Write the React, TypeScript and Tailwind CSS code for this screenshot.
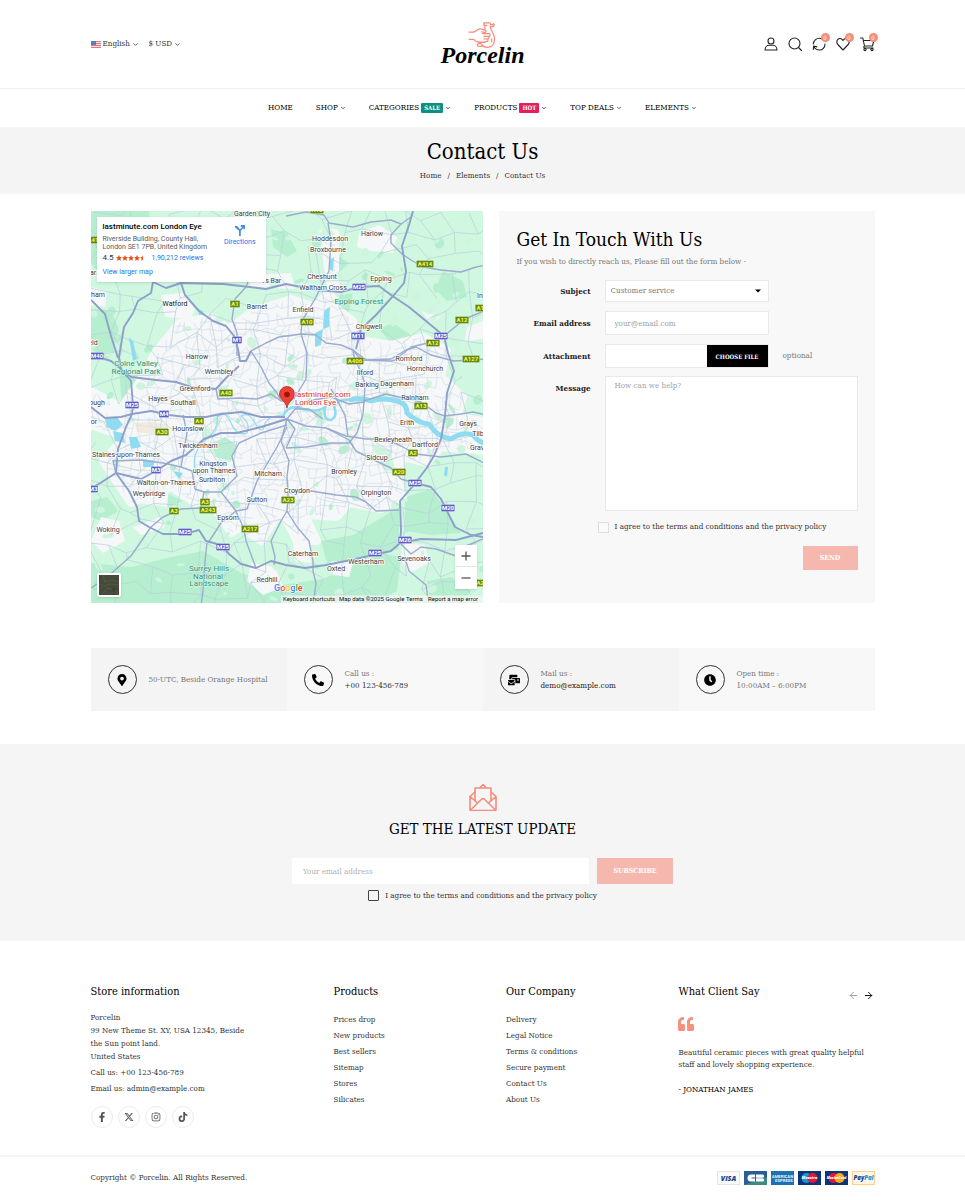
import React from "react";
import { FaMapMarkerAlt, FaPhoneAlt, FaMailBulk, FaClock, FaQuoteLeft, FaFacebookF, FaInstagram, FaTiktok } from "react-icons/fa";
import { FaXTwitter } from "react-icons/fa6";
import { ChevronDown, ArrowLeft, ArrowRight } from "lucide-react";

/* ---------- Map data ---------- */

type Label = [string, number, number];

const towns: Label[] = [
  ["Garden City", 161, 5], ["Watford", 84, 95], ["Barnet", 166, 98], ["rs Bar", 181, 72], ["ham", 7, 86], ["eld", 2, 134],
  ["ar", 2, 64], ["Harrow", 106, 148], ["Wembley", 128, 163], ["Greenford", 104, 180], ["Hayes", 67, 190], ["Southall", 92, 194],
  ["ough", 6, 194], ["Harlow", 281, 25], ["Hoddesdon", 239, 30], ["Broxbourne", 237, 41], ["Cheshunt", 231, 68],
  ["Waltham Cross", 232, 79], ["Epping", 290, 70], ["Enfield", 212, 101], ["Chigwell", 278, 118], ["Romford", 318, 150],
  ["Hornchurch", 334, 160], ["Ilford", 274, 164], ["Barking", 276, 176], ["Dagenham", 306, 175], ["Rainham", 324, 189],
  ["In", 389, 87], ["Hounslow", 97, 220], ["Twickenham", 107, 237], ["Staines-upon-Thames", 35, 246], ["Kingston", 122, 255],
  ["upon Thames", 123, 262], ["Surbiton", 121, 271], ["Mitcham", 177, 265], ["Walton-on-Thames", 75, 274], ["Weybridge", 58, 285],
  ["Sutton", 166, 291], ["Epsom", 137, 309], ["Woking", 17, 321], ["Redhill", 176, 371], ["or", 3, 213], ["Croydon", 206, 282],
  ["Caterham", 212, 345], ["Oxted", 245, 360], ["Westerham", 275, 353], ["Sevenoaks", 323, 350], ["Bromley", 253, 263],
  ["Orpington", 285, 284], ["Sidcup", 286, 249], ["Bexleyheath", 302, 231], ["Dartford", 334, 236], ["Erith", 316, 214],
  ["Grays", 377, 215], ["Tilb", 387, 225], ["Grav", 386, 239],
];

const parks: Label[] = [
  ["Colne Valley", 45, 155], ["Regional Park", 45, 163], ["Epping Forest", 268, 93],
  ["Surrey Hills", 118, 360], ["National", 117, 368], ["Landscape", 118, 375],
];

const aRoads: Label[] = [
  ["A1", 144, 93], ["A40", 135, 182], ["A41", 2, 29], ["A414", 334, 53], ["A10", 216, 111], ["A10", 226, -1], ["A12", 371, 109],
  ["A12", 342, 132], ["A406", 264, 150], ["A127", 380, 148], ["A12", 391, 97], ["A13", 330, 195], ["A4", 108, 210], ["A30", 71, 221],
  ["A3", 114, 291], ["A243", 117, 299], ["A3", 83, 300], ["A217", 159, 318], ["A2", 322, 242], ["A20", 308, 261], ["A23", 197, 289], ["A21", 391, 372],
];

const motorways: Label[] = [
  ["M1", 146, 129], ["M40", 6, 145], ["M25", 41, 194], ["M25", 268, 76], ["M11", 267, 125], ["M25", 350, 125], ["M4", 73, 203],
  ["M3", 65, 259], ["M3", 2, 278], ["M25", 94, 321], ["M25", 132, 336], ["M25", 324, 272], ["M20", 357, 297], ["M26", 314, 329], ["M25", 284, 342],
];

const trunk = [
  "62,71 60,82 47,90 42,102 33,116 28,146 30,158 40,170 42,194 41,203 35,216 27,238 25,262 38,280 46,296 48,310 58,316 72,323 94,323 108,319 115,330 130,334 138,343 150,353 165,357 180,350 195,354 214,357 235,354 260,349 300,340 309,332 310,320 309,290 322,275 335,258 343,245 350,228 354,205 356,182 363,160 357,142 353,125 335,110 318,96 300,84 288,75 268,76 250,81 225,79 195,73 175,78 150,75 132,73 90,72 75,77 62,71",
  "78,60 90,72 94,84 108,100 122,110 135,115 143,125 147,138 149,150 155,150 160,140",
  "0,89 14,103 20,125 27,147",
  "0,144 20,150 40,166 65,169 85,171 100,176 125,178 136,166 148,155",
  "0,196 14,207 30,206 41,203 60,200 78,204 95,206 115,206 130,203 150,201 170,206 194,206",
  "0,278 25,262 50,268 65,260 80,250 95,244 113,228 130,222 146,222 170,216 196,208",
  "322,0 318,14 311,35 315,60 313,72 303,84 285,104 270,118 265,138",
  "309,332 330,328 365,329 392,322",
  "328,273 340,276 350,288 358,304 364,316 380,324 392,326",
];

const primary = [
  "311,43 320,49 332,56 350,59 370,61 385,56 395,54",
  "353,125 364,116 374,108 395,99",
  "160,140 175,132 188,126 210,123 225,124 235,132 250,134 262,139 264,150 270,160 274,174 273,192",
  "262,139 275,149 300,148 315,139 325,136 340,144 363,150 395,148",
  "262,139 270,149 300,150 304,149 320,136 345,130 356,124",
  "160,63 155,76 144,88 141,108 146,122 146,145",
  "237,12 240,30 238,60 224,88 211,110 210,123 216,142 215,168 203,188",
  "195,5 215,1 233,4 238,12 262,16 280,11 300,9 310,13 320,6",
  "310,13 300,24 300,32 311,43",
  "125,178 127,188 150,187 166,188 180,183 190,190 198,190",
  "160,140 170,156 178,172 186,182 190,190",
  "0,377 15,367 40,345 60,316 72,306 90,298 110,297 113,281 130,281 146,265 141,245 148,232 170,222 196,214",
  "130,281 145,300 153,318 155,330 165,357",
  "145,300 130,312 117,332",
  "145,300 156,298 166,270 186,236 196,216",
  "196,208 190,230 198,250 196,265 197,286 196,300 206,316 218,330 222,350 222,360 225,372 222,395",
  "196,208 215,215 235,217 255,225 275,228 295,228 310,235 325,243 350,246 375,243 395,253",
  "235,217 258,229 265,240 285,250 300,257 310,268 324,272",
  "197,282 220,280 245,284 265,286 275,291 285,300 308,299",
  "195,237 215,236 240,232 258,232 266,222 272,203 273,190",
  "240,178 254,204 257,226",
  "25,262 22,250 50,249 72,252 90,256 101,260 104,278 113,281",
  "310,333 320,343 330,336 345,338 365,345 375,335 392,328",
  "314,347 318,360 335,374 338,395",
  "353,205 370,203 382,201 395,204",
  "273,190 295,183 308,186 330,191 345,202 354,205",
  "195,237 204,218 196,208 204,198 218,198 232,208",
  "183,354 184,346 180,330 190,310 196,300",
  "116,332 114,350 112,380 110,395",
  "204,198 216,190 240,186 258,193 273,191",
  "90,256 96,222 92,204",
];

const woods = [
  "0,0 58,0 60,18 42,34 48,56 34,70 10,66 0,52",
  "0,98 20,100 28,118 22,144 12,150 0,136",
  "28,158 50,172 40,192 30,186",
  "250,84 262,82 258,100 244,118 234,124 238,104",
  "240,50 246,44 258,52 248,62 240,60",
  "0,352 40,356 80,346 112,340 150,362 190,374 232,368 290,342 310,346 306,380 280,395 0,395",
  "314,286 340,278 356,300 370,322 340,324 314,320",
  "230,330 262,324 308,296 308,338 262,350 236,352",
  "288,118 302,112 320,124 322,138 300,132",
  "180,18 196,22 206,40 196,46 182,36",
  "352,60 372,70 376,86 356,90 344,78",
  "0,290 16,286 28,300 10,310 0,306",
  "60,286 76,282 92,290 78,296",
  "336,370 360,366 380,380 370,395 340,395",
];

const urban =
  "M88 112 L120 106 138 118 162 100 200 88 224 96 240 78 232 22 244 22 244 96 262 110 262 128 300 134 332 126 356 140 350 166 372 186 366 206 392 210 392 240 350 236 336 252 312 246 306 266 312 286 290 298 258 292 246 306 214 304 226 330 206 330 190 300 170 330 150 316 140 322 126 300 130 284 104 292 80 276 40 292 26 272 12 250 34 226 0 214 0 180 30 196 48 172 64 142Z";

const suburbs = [
  "70,84 92,82 104,98 100,108 74,106", "268,22 288,14 306,26 302,42 280,40 266,36", "10,306 28,310 34,330 12,342 0,330",
  "312,332 334,334 338,352 318,362 310,350", "160,352 184,356 192,376 172,384 156,370", "376,116 392,110 392,128 374,130",
  "202,330 220,332 220,352 204,350", "240,350 262,352 258,366 242,364", "0,76 16,80 14,96 0,94", "50,280 78,276 76,296 48,292",
  "155,64 200,62 204,78 160,76", "330,100 350,106 340,112", "42,316 70,306 74,316 50,324",
];

/* Small deterministic generator so the street mesh is the same on each draw */
const noise = (i: number, j: number, k: number) => {
  const v = Math.sin(i * 127.1 + j * 311.7 + k * 74.7) * 43758.5453;
  return v - Math.floor(v);
};

const mesh = (cell: number, keep: number, seed: number) => {
  const n = Math.ceil(392 / cell) + 1;
  const at = (i: number, j: number) =>
    `${((i + noise(i, j, seed) * 0.9 - 0.4) * cell).toFixed(1)} ${((j + noise(j, i, seed + 5) * 0.9 - 0.4) * cell).toFixed(1)}`;
  let d = "";
  for (let i = 0; i < n; i++)
    for (let j = 0; j < n; j++) {
      if (noise(i, j, seed + 1) < keep) d += `M${at(i, j)}L${at(i + 1, j)}`;
      if (noise(i, j, seed + 2) < keep) d += `M${at(i, j)}L${at(i, j + 1)}`;
    }
  return d;
};

const streets = mesh(8, 0.7, 3);
const lanes = mesh(21, 0.75, 11);

const patches = Array.from({ length: 190 }, (_, i) => ({
  x: noise(i, 3, 1) * 392,
  y: noise(i, 7, 2) * 392,
  r: 1.5 + noise(i, 9, 4) * 5,
  s: 1 + noise(i, 2, 8) * 4,
  t: noise(i, 1, 6) * 180,
}));

const ponds = [
  "14,208 26,206 32,214 24,220 16,216", "22,220 32,222 34,232 24,230", "38,226 46,226 50,236 40,238", "52,248 64,250 62,256 52,256",
  "82,260 92,262 88,268", "233,100 239,96 238,116 232,118", "224,122 232,118 230,134 224,136", "238,50 243,46 242,60 238,58",
  "38,126 42,130 46,148 42,150", "107,98 112,100 112,104 108,104", "354,256 357,256 356,266 353,264",
];

function Shield({ label, fill, ink }: { label: Label; fill: string; ink: string }) {
  const [text, x, y] = label;
  const w = text.length * 3.7 + 2.4;
  return (
    <g>
      <rect x={x - w / 2} y={y - 3.6} width={w} height={7.2} rx={0.8} fill={fill} stroke="#ffffff" strokeWidth={0.3} />
      <text x={x} y={y + 2.2} textAnchor="middle" fontSize={6} fontWeight={700} fill={ink}>{text}</text>
    </g>
  );
}

function LondonMap() {
  return (
    <svg viewBox="0 0 392 392" className="block h-full w-full font-['Roboto',sans-serif]" role="img" aria-label="Map of London">
      <rect width="392" height="392" fill="#d0f8e0" />
      {woods.map((p) => <polygon key={p} points={p} fill="#b6efd0" />)}
      <path d={urban} fill="#f5f7f8" stroke="#f5f7f8" strokeWidth="8" strokeLinejoin="round" />
      {suburbs.map((p) => <polygon key={p} points={p} fill="#f5f7f8" />)}
      {patches.map((p, i) => (
        <ellipse key={i} cx={p.x} cy={p.y} rx={p.r} ry={p.s} fill={i % 3 ? "#cdf6dd" : "#b6efd0"} transform={`rotate(${p.t} ${p.x} ${p.y})`} />
      ))}
      <polygon points="122,232 134,226 146,234 140,250 124,246" fill="#b6efd0" />
      <polygon points="44,212 62,211 76,214 72,224 46,221" fill="#f2ebdd" />
      <polygon points="280,232 300,240 304,262 292,258" fill="#cdf6dd" />
      <clipPath id="built"><path d={urban} /></clipPath>
      <path d={streets} stroke="#d6deeb" strokeWidth="0.7" fill="none" clipPath="url(#built)" />
      <path d={lanes} stroke="#b9cedb" strokeWidth="0.7" fill="none" />
      {ponds.map((p) => <polygon key={p} points={p} fill="#8fdcf0" />)}
      <path d="M104 258 Q100 240 118 226 Q128 216 126 206 Q134 198 140 212 Q146 226 156 222 Q160 212 150 205 Q158 200 164 212 Q172 226 174 212 Q178 204 192 205" fill="none" stroke="#8fdcf0" strokeWidth="1.2" />
      <path d="M192 205 Q198 192 212 198 Q226 202 234 196 Q232 210 240 209 Q247 206 243 195 Q250 186 262 190" fill="none" stroke="#8fdcf0" strokeWidth="2.5" />
      <path d="M258 189 Q270 186 280 190 Q292 186 306 190 Q316 192 316 202 Q326 212 338 213 Q346 226 360 228 Q372 220 382 224 Q388 232 395 232" fill="none" stroke="#8fdcf0" strokeWidth="5" strokeLinejoin="round" />
      {primary.map((p) => (
        <polyline key={p} points={p} fill="none" stroke="#9caccf" strokeWidth="1.4" strokeLinejoin="round" />
      ))}
      {trunk.map((p) => (
        <polyline key={p} points={p} fill="none" stroke="#8e9fca" strokeWidth="1.900" strokeLinejoin="round" />
      ))}
      {aRoads.map((l, i) => <Shield key={i} label={l} fill="#5f8a12" ink="#fff35c" />)}
      {motorways.map((l, i) => <Shield key={i} label={l} fill="#5b5fc7" ink="#ffffff" />)}
      <g fontSize="7" fill="#3c4043" stroke="#ffffff" strokeWidth="1.6" strokeOpacity="0.85" paintOrder="stroke" textAnchor="middle">
        {towns.map(([t, x, y]) => <text key={t + x} x={x} y={y} fill={t === "Watford" ? "#111111" : undefined}>{t}</text>)}
      </g>
      <g fontSize="8" fill="#36907a" stroke="#d9f8e6" strokeWidth="1" paintOrder="stroke" textAnchor="middle">
        {parks.map(([t, x, y]) => <text key={t} x={x} y={y}>{t}</text>)}
      </g>
      <path d="M196 197 C195 190 188.500 189 188.500 183 A7.500 7.500 0 0 1 203.500 183 C203.500 189 197 190 196 197Z" fill="#ea4335" stroke="#b31412" strokeWidth="0.7" />
      <circle cx="196" cy="183.500" r="2.800" fill="#a50e0e" />
      <g fontSize="8" fill="#d93025" stroke="#ffffff" strokeWidth="1.500" paintOrder="stroke">
        <text x="204" y="186">lastminute.com</text>
        <text x="204" y="194">London Eye</text>
      </g>
      <text x="183" y="380" fontSize="9" fontWeight="500" stroke="#ffffff" strokeWidth="1.200" paintOrder="stroke">
        <tspan fill="#4285f4">G</tspan><tspan fill="#ea4335">o</tspan><tspan fill="#fbbc05">o</tspan><tspan fill="#4285f4">g</tspan><tspan fill="#34a853">l</tspan><tspan fill="#ea4335">e</tspan>
      </text>
      <rect x="190" y="384.500" width="202" height="7.500" fill="#f5f5f5" fillOpacity="0.75" />
      <g fontSize="6" fill="#111111">
        <text x="192" y="390">Keyboard shortcuts</text>
        <text x="248" y="390">Map data ©2025 Google</text>
        <text x="315" y="390">Terms</text>
        <text x="337" y="390">Report a map error</text>
      </g>
    </svg>
  );
}

function MapPanel() {
  return (
    <div className="relative aspect-square w-1/2 shrink-0 overflow-hidden font-['Roboto',sans-serif]">
      <LondonMap />
      <div className="absolute left-[6px] top-[6px] flex h-[65px] w-[169px] justify-between bg-white pl-[6px] pr-[10px] pt-[5px] shadow">
        <div>
          <h2 className="text-[8px] font-medium leading-[10px] text-black">lastminute.com London Eye</h2>
          <p className="mt-[3px] text-[7px] leading-[8px] text-[#5b5b5b]">Riverside Building, County Hall,<br />London SE1 7PB, United Kingdom</p>
          <p className="mt-[2px] flex items-center gap-[2px] text-[7px] leading-[10px]">
            <span className="text-[8px] text-[#333]">4.5</span>
            <Stars />
            <a href="#reviews" className="pl-[4px] text-[#1a73e8]">1,90,212 reviews</a>
          </p>
          <a href="#larger" className="mt-[4px] block text-[7px] leading-[10px] text-[#1a73e8]">View larger map</a>
        </div>
        <a href="#directions" className="flex h-[28px] flex-col items-center gap-[2px] pt-[2px] text-[7px] leading-[9px] text-[#1a73e8]">
          <svg viewBox="0 0 12 12" className="size-[12px] shrink-0">
            <path d="M1 2h2.200l2.800 3.300L8.200 3H6.800V1H11v4.200H9.500V4L6.800 6.800V12H5V6.800L1 3.500Z" fill="#4a8fe0" />
          </svg>
          Directions
        </a>
      </div>
      <button type="button" aria-label="Satellite view" className="absolute bottom-[6px] left-[6px] size-[24px] rounded-[2px] border-2 border-white bg-[#454a3a] shadow">
        <svg viewBox="0 0 20 20" className="size-full">
          <path d="M0 9l6 2 5-2 9 1M4 0l2 7 7-2 7 2M3 20l5-7 6 1 6 6" stroke="#5a5d49" strokeWidth="0.700" fill="none" />
          <path d="M0 0l3 2-3 4zM12 12l5 1-2 4z" fill="#38422f" />
        </svg>
      </button>
      <div className="absolute bottom-[14px] right-[6px] flex w-[22px] flex-col divide-y divide-[#e6e6e6] bg-white shadow">
        <button type="button" aria-label="Zoom in" className="flex h-[22px] items-center justify-center">
          <svg viewBox="0 0 10 10" className="size-[10px]"><path d="M5 .5v9M.5 5h9" stroke="#555" strokeWidth="1.300" /></svg>
        </button>
        <button type="button" aria-label="Zoom out" className="flex h-[22px] items-center justify-center">
          <svg viewBox="0 0 10 10" className="size-[10px]"><path d="M.5 5h9" stroke="#555" strokeWidth="1.300" /></svg>
        </button>
      </div>
    </div>
  );
}

function Stars() {
  const star = "M3 0l.9 2 2.100.2-1.600 1.400.5 2.200L3 4.700 1.100 5.800l.5-2.200L0 2.200 2.100 2z";
  return (
    <svg viewBox="0 0 30 6" className="h-[6px] w-[30px]" role="img" aria-label="4.5 stars">
      {[0, 6, 12, 18].map((x) => <path key={x} d={star} transform={`translate(${x} 0)`} fill="#e7511b" />)}
      <path d="M27 0v4.700l-1.900 1.100.5-2.200L24 2.200 26.100 2z" fill="#e7511b" />
    </svg>
  );
}

/* ---------- Header ---------- */

function Logo() {
  return (
    <a href="#home" className="flex flex-col items-center pt-[2px]">
      <svg viewBox="0 0 30 28" className="h-[27px] w-[29px]" fill="none" stroke="#f48d7c" strokeWidth="1.300" strokeLinecap="round" strokeLinejoin="round">
        <path d="M16.500 1h6.500v2c1.500 0 3-.3 3.500-1.300 1.500 1.300.5 3-2 3H23c0 4 4.500 6 4.500 13 0 5-2.500 8.500-7 8.500-3 0-5.500-.8-6.500-3" />
        <path d="M16.500 1v2.500h3M17.500 4v4" />
        <path d="M1 10.500h5l6-3.500 6 1.500c1.500.8.5 2.500-1 2.300l-3-.5" />
        <path d="M1 18h4.500c2 2 4 3 6.500 3h5.500M15 12h6.500c1.800 0 1.800 2.800 0 2.800H16.500M20.500 14.800c1.700 0 1.700 2.800 0 2.800h-4M19.500 17.600c1.700 0 1.500 2.800 0 2.800h-2" />
        <path d="M13.500 22.500c-2-.5-4-.2-4 1.200s2 2 4.500 1.500M6 18v.1M24.500 17.500v3" />
      </svg>
      <span className="-mt-[8px] font-['Liberation_Serif',cursive] text-[24px] font-bold italic leading-[28px] text-black">Porcelin</span>
    </a>
  );
}

function Pick({ label, value, children }: { label: string; value: string; children?: React.ReactNode }) {
  return (
    <div className="relative flex items-center gap-[2px]">
      {children}
      <select aria-label={label} defaultValue={value} className="h-[16px] appearance-none bg-transparent pr-[8px] text-[8px] leading-[16px] outline-none">
        <option>{value}</option>
      </select>
      <ChevronDown strokeWidth={2.5} className="pointer-events-none absolute right-0 size-[7px]" />
    </div>
  );
}

function Flag() {
  return (
    <svg viewBox="0 0 10 7" className="h-[7px] w-[10px]">
      <rect width="10" height="7" fill="#f3dfe1" />
      <path d="M0 .5h10M0 2.500h10M0 4.500h10M0 6.500h10" stroke="#dd7a80" />
      <rect width="5" height="4" fill="#5b7cc4" />
    </svg>
  );
}

const actions: { name: string; count?: boolean; art: React.ReactNode }[] = [
  { name: "Account", art: <><circle cx="7" cy="4" r="3" /><path d="M1 13c0-3.500 2.500-4.800 4.200-4.800h3.600C10.500 8.200 13 9.500 13 13Z" /></> },
  { name: "Search", art: <><circle cx="6.500" cy="6.500" r="5.500" /><path d="M10.500 10.500l3 3" /></> },
  { name: "Compare", count: true, art: <path d="M1.300 7C1.500 3.700 4.200 1.300 7.500 1.300c1 0 2 .3 3 .9M13 7c0 3.500-2.500 6-5.500 6-2.500 0-4.500-1.200-5.700-3.500M1.300 12.500l.3-3.500 3.300.9" /> },
  { name: "Wishlist", count: true, art: <path d="M7 13L1.800 7.500C-.3 5 1.200 1.500 4 1.500c1.300 0 2.300.7 3 2 .7-1.300 1.700-2 3-2 2.800 0 4.300 3.500 2.200 6Z" /> },
  { name: "Cart", count: true, art: <><path d="M.5 1h2.300l1.700 8h8l1.300-5.500H3.400M4.500 9c-1 .3-1 2 0 2H13" /><circle cx="5" cy="12.500" r="1.100" /><circle cx="12" cy="12.500" r="1.100" /></> },
];

const menu: { text: string; tag?: string; tone?: string; arrow: boolean }[] = [
  { text: "HOME", arrow: false },
  { text: "SHOP", arrow: true },
  { text: "CATEGORIES", tag: "SALE", tone: "bg-[#0f8f80]", arrow: true },
  { text: "PRODUCTS", tag: "HOT", tone: "bg-[#e41f5f]", arrow: true },
  { text: "TOP DEALS", arrow: true },
  { text: "ELEMENTS", arrow: true },
];

function Header() {
  return (
    <header>
      <div className="border-b border-[#eeeeee]">
        <div className="mx-auto grid h-[88px] max-w-[784px] grid-cols-3 items-center">
          <div className="flex items-center gap-[10px]">
            <Pick label="Language" value="English"><Flag /></Pick>
            <Pick label="Currency" value="$ USD" />
          </div>
          <Logo />
          <div className="flex justify-end gap-[10px] pr-[1px]">
            {actions.map((a) => (
              <button key={a.name} type="button" aria-label={a.name} className="relative size-[14px]">
                <svg viewBox="0 0 14 14" className="size-[14px] overflow-visible" fill="none" stroke="#222222" strokeWidth="1.100" strokeLinecap="round" strokeLinejoin="round">{a.art}</svg>
                {a.count && (
                  <span className="absolute -right-[4px] -top-[4px] flex size-[9px] items-center justify-center rounded-full bg-[#f48d7c] text-[6px] leading-none text-white">0</span>
                )}
              </button>
            ))}
          </div>
        </div>
      </div>
      <nav className="flex h-[38px] items-center justify-center gap-[23px] text-[8px] leading-[12px] text-black">
        {menu.map((m) => (
          <a key={m.text} href="#menu" className="flex items-center gap-[2px]">
            {m.text}
            {m.tag && <span className={`${m.tone} rounded-[1px] px-[3px] text-[6px] font-bold leading-[10px] text-white`}>{m.tag}</span>}
            {m.arrow && <ChevronDown strokeWidth={2.5} className="size-[6px]" />}
          </a>
        ))}
      </nav>
    </header>
  );
}

/* ---------- Contact form ---------- */

const rowLabel = "w-[74px] shrink-0 text-right text-[8px] font-bold leading-[12px] text-[#222222]";
const field = "border border-[#e9e9e9] bg-white text-[8px] text-[#777777] outline-none placeholder:text-[#a0a0a0]";

function ContactForm() {
  return (
    <form className="ml-[16px] flex-1 bg-[#f8f8f8] pl-[18px] pr-[17px] pt-[16px]">
      <h2 className="text-[19px] leading-[24px] text-black">Get In Touch With Us</h2>
      <p className="mt-[5px] text-[8px] leading-[12px] text-[#777777]">If you wish to directly reach us, Please fill out the form below -</p>
      <div className="mt-[12px] flex items-center gap-[14px]">
        <label htmlFor="subject" className={rowLabel}>Subject</label>
        <div className="relative w-[164px]">
          <select id="subject" className={`${field} block h-[22px] w-full appearance-none px-[5px]`}><option>Customer service</option></select>
          <svg viewBox="0 0 6 4" className="pointer-events-none absolute right-[8px] top-[9px] h-[4px] w-[6px]"><path d="M0 .5h6L3 3.500z" /></svg>
        </div>
      </div>
      <div className="mt-[9px] flex items-center gap-[14px]">
        <label htmlFor="email" className={rowLabel}>Email address</label>
        <input id="email" type="email" placeholder="your@email.com" className={`${field} h-[24px] w-[164px] px-[9px]`} />
      </div>
      <div className="mt-[9px] flex items-center gap-[14px]">
        <label htmlFor="attachment" className={rowLabel}>Attachment</label>
        <label className={`${field} flex h-[24px] w-[164px] cursor-pointer justify-end`}>
          <input id="attachment" type="file" className="sr-only" />
          <span className="flex w-[61px] items-center justify-center bg-black text-[6px] font-bold text-white">CHOOSE FILE</span>
        </label>
        <span className="text-[8px] text-[#777777]">optional</span>
      </div>
      <div className="mt-[8px] flex gap-[14px]">
        <label htmlFor="message" className={`${rowLabel} pt-[6px]`}>Message</label>
        <textarea id="message" placeholder="How can we help?" className={`${field} block h-[135px] min-w-0 flex-1 resize-none px-[9px] py-[3px] leading-[12px]`} />
      </div>
      <label className="ml-[81px] mt-[9px] flex items-center gap-[6px] text-[8px] leading-[14px] text-[#333333]">
        <input type="checkbox" className="size-[11px] shrink-0 appearance-none border border-[#dddddd] bg-[#fafafa] checked:bg-[#f48d7c]" />
        I agree to the terms and conditions and the privacy policy
      </label>
      <button type="submit" className="ml-auto mt-[12px] flex h-[24px] w-[55px] items-center justify-center bg-[#f6b8ae] text-[7px] font-bold text-white">SEND</button>
    </form>
  );
}

const contacts = [
  { Icon: FaMapMarkerAlt, lines: ["50-UTC, Beside Orange Hospital"], tone: "bg-[#f4f4f4]", ink: "text-[#777777]" },
  { Icon: FaPhoneAlt, lines: ["Call us :", "+00 123-456-789"], tone: "bg-[#f8f8f8]", ink: "text-[#333333]" },
  { Icon: FaMailBulk, lines: ["Mail us :", "demo@example.com"], tone: "bg-[#f4f4f4]", ink: "text-[#222222]" },
  { Icon: FaClock, lines: ["Open time :", "10:00AM – 6:00PM"], tone: "bg-[#f8f8f8]", ink: "text-[#777777]" },
];

function ContactCards() {
  return (
    <div className="mt-[45px] grid grid-cols-4">
      {contacts.map(({ Icon, lines, tone, ink }) => (
        <div key={lines[0]} className={`${tone} flex h-[63px] items-center gap-[12px] pl-[17px]`}>
          <span className="flex size-[29px] shrink-0 items-center justify-center rounded-full border border-[#333333]">
            <Icon className="size-[12px] text-black" />
          </span>
          <p className="whitespace-nowrap text-[8px] leading-[12px]">
            {lines.map((l, i) => <span key={l} className={`block ${i === lines.length - 1 ? ink : "text-[#777777]"}`}>{l}</span>)}
          </p>
        </div>
      ))}
    </div>
  );
}

function Newsletter() {
  return (
    <section className="mt-[33px] flex flex-col items-center bg-[#f5f5f5] pb-[39px] pt-[39px]">
      <svg viewBox="0 0 28 28" className="size-[28px]" fill="none" stroke="#f48d7c" strokeWidth="1.600" strokeLinejoin="round" strokeLinecap="round">
        <path d="M6 9L1 13.500V26.500a1 1 0 0 0 1 1h24a1 1 0 0 0 1-1V13.500L22 9M1 13.500l7.500 6.500M27 13.500L19.500 20M1.500 27l10.800-10.500a2.500 2.500 0 0 1 3.400 0L26.500 27" />
        <path d="M6 17.500V5h16v12.500M10.500 5L14 1.500 17.500 5" />
      </svg>
      <h2 className="mt-[8px] text-[15px] leading-[20px] text-black">GET THE LATEST UPDATE</h2>
      <form className="mt-[19px] flex w-full max-w-[381px] flex-col items-center">
        <div className="flex w-full gap-[8px]">
          <input type="email" aria-label="Your email address" placeholder="Your email address" className="h-[26px] min-w-0 flex-1 bg-white px-[11px] text-[8px] outline-none placeholder:text-[#b0b0b0]" />
          <button type="submit" className="h-[26px] w-[76px] bg-[#f6b8ae] text-[7px] font-bold text-white">SUBSCRIBE</button>
        </div>
        <label className="mt-[5px] flex items-center gap-[6px] text-[8px] leading-[13px] text-[#333333]">
          <input type="checkbox" className="size-[11px] shrink-0 appearance-none rounded-[1px] border border-[#444444] checked:bg-[#f48d7c]" />
          I agree to the terms and conditions and the privacy policy
        </label>
      </form>
    </section>
  );
}

/* ---------- Footer ---------- */

function LinkColumn({ title, items }: { title: string; items: string[] }) {
  return (
    <div>
      <h3 className="text-[11px] leading-[14px] text-black">{title}</h3>
      <ul className="mt-[13px]">
        {items.map((t) => <li key={t} className="text-[8px] leading-[16px]"><a href="#link">{t}</a></li>)}
      </ul>
    </div>
  );
}

function Payments() {
  const card = "h-[14px] w-[23px]";
  const type = "font-['Open_Sans',sans-serif] font-extrabold italic";
  return (
    <div className="flex gap-[4px]">
      <svg viewBox="0 0 23 14" className={card}><rect x=".5" y=".5" width="22" height="13" fill="#fafafa" stroke="#e5e5e5" /><text x="11.500" y="9.800" textAnchor="middle" fontSize="7" fill="#1b3f8f" className={type}>VISA</text></svg>
      <svg viewBox="0 0 23 14" className={card}>
        <rect width="23" height="14" fill="#2a5e97" /><path d="M0 14L23 6v8z" fill="#3b8a83" />
        <path d="M11 3.500H7a3.500 3.500 0 0 0 0 7h4V7.500H7.500v-1H11zM12 3.500h6.500a1.600 1.600 0 0 1 0 3.300H12zM12 7.300h6.500a1.600 1.600 0 0 1 0 3.300H12z" fill="#ffffff" />
      </svg>
      <svg viewBox="0 0 23 14" className={card}><rect width="23" height="14" fill="#1c72b0" /><g fontSize="4.200" fontWeight="700" fill="#e8f4ff" textAnchor="middle" fontFamily="Roboto, sans-serif"><text x="11.500" y="6.500">AMERICAN</text><text x="13" y="11">EXPRESS</text></g></svg>
      <svg viewBox="0 0 23 14" className={card}><rect width="23" height="14" fill="#0c3578" /><circle cx="8.500" cy="7" r="5" fill="#1799d6" /><circle cx="14.500" cy="7" r="5" fill="#e3173e" /><text x="11.500" y="8.400" textAnchor="middle" fontSize="3.800" fill="#ffffff" className={type}>Maestro</text></svg>
      <svg viewBox="0 0 23 14" className={card}><rect width="23" height="14" fill="#0c3578" /><circle cx="8.500" cy="7" r="5" fill="#e3173e" /><circle cx="14.500" cy="7" r="5" fill="#f9a51a" /><text x="11.500" y="8.400" textAnchor="middle" fontSize="3.400" fill="#ffffff" className={type}>MasterCard</text></svg>
      <svg viewBox="0 0 23 14" className={card}><rect x=".5" y=".5" width="22" height="13" fill="#fff6e6" stroke="#fbd08f" /><text x="11.500" y="9" textAnchor="middle" fontSize="6" className={type}><tspan fill="#1b3f8f">Pay</tspan><tspan fill="#1799d6">Pal</tspan></text></svg>
    </div>
  );
}

const socials = [
  { name: "Facebook", Icon: FaFacebookF },
  { name: "X", Icon: FaXTwitter },
  { name: "Instagram", Icon: FaInstagram },
  { name: "TikTok", Icon: FaTiktok },
];

function Footer() {
  return (
    <footer>
      <div className="mx-auto grid min-h-[214px] max-w-[784px] grid-cols-[31%_22%_22%_25%] pt-[44px]">
        <div className="text-[8px]">
          <h3 className="text-[11px] leading-[14px] text-black">Store information</h3>
          <address className="mt-[12px] not-italic leading-[13px]">
            Porcelin<br />99 New Theme St. XY, USA 12345, Beside<br />the Sun point land.<br />United States
          </address>
          <p className="mt-[3px] leading-[13px]">Call us: <a href="tel:+00123456789">+00 123-456-789</a></p>
          <p className="mt-[3px] leading-[13px]">Email us: <a href="mailto:admin@example.com">admin@example.com</a></p>
          <div className="mt-[11px] flex gap-[5px]">
            {socials.map(({ name, Icon }) => (
              <a key={name} href="#social" aria-label={name} className="flex size-[22px] items-center justify-center rounded-full border border-[#ececec] text-[#555555]"><Icon className="size-[10px]" /></a>
            ))}
          </div>
        </div>
        <LinkColumn title="Products" items={["Prices drop", "New products", "Best sellers", "Sitemap", "Stores", "Silicates"]} />
        <LinkColumn title="Our Company" items={["Delivery", "Legal Notice", "Terms & conditions", "Secure payment", "Contact Us", "About Us"]} />
        <div>
          <div className="flex items-start justify-between">
            <h3 className="text-[11px] leading-[14px] text-black">What Client Say</h3>
            <div className="flex gap-[4px] pt-[5px]">
              <button type="button" aria-label="Previous"><ArrowLeft className="size-[11px] text-[#999999]" /></button>
              <button type="button" aria-label="Next"><ArrowRight className="size-[11px] text-black" /></button>
            </div>
          </div>
          <FaQuoteLeft className="mt-[15px] size-[16px] text-[#f4917f]" />
          <blockquote className="mt-[15px] text-[8px] leading-[12px]">
            Beautiful ceramic pieces with great quality helpful staff and lovely shopping experience.
          </blockquote>
          <p className="mt-[13px] text-[8px] leading-[12px] text-black">- JONATHAN JAMES</p>
        </div>
      </div>
      <div className="border-t-2 border-[#f4f4f4]">
        <div className="mx-auto flex h-[42px] max-w-[784px] items-center justify-between">
          <p className="text-[8px] leading-[12px]">Copyright © Porcelin. All Rights Reserved.</p>
          <Payments />
        </div>
      </div>
    </footer>
  );
}

export default function App() {
  return (
    <div className="bg-white font-['DejaVu_Serif_Condensed','Liberation_Serif',serif] text-[#333333]">
      <Header />
      <div className="flex flex-col items-center bg-[#f4f4f4] pb-[12px] pt-[10px]">
        <h1 className="text-[22px] leading-[30px] text-black">Contact Us</h1>
        <nav aria-label="Breadcrumb" className="mt-[3px] flex gap-[6px] text-[8px] leading-[12px]">
          <a href="#home">Home</a><span>/</span><a href="#elements">Elements</a><span>/</span><span>Contact Us</span>
        </nav>
      </div>
      <main>
        <div className="mx-auto max-w-[784px] pt-[17px]">
          <div className="flex">
            <MapPanel />
            <ContactForm />
          </div>
          <ContactCards />
        </div>
        <Newsletter />
      </main>
      <Footer />
    </div>
  );
}
